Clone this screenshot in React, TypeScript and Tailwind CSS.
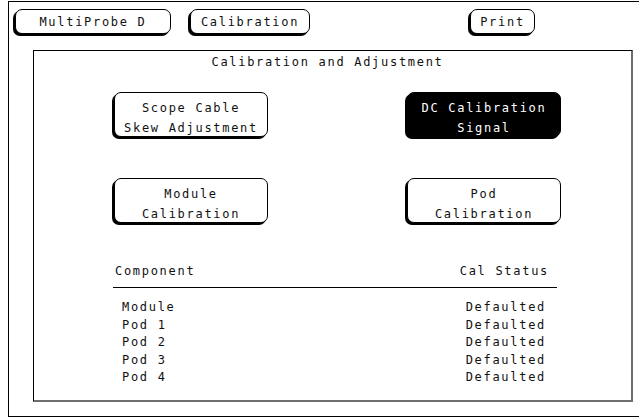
function Btn({
  children,
  dark,
  className,
}: {
  children: React.ReactNode;
  dark?: boolean;
  className?: string;
}) {
  return (
    <div
      className={
        "border border-black rounded-[7px] shadow-[-2px_2px_0_0_#000] text-center " +
        (dark ? "bg-black text-white " : "bg-white text-[#111] ") +
        (className || "")
      }
    >
      {children}
    </div>
  );
}

const rows = ["Module", "Pod 1", "Pod 2", "Pod 3", "Pod 4"];

export default function App() {
  return (
    <div className="w-[639px] h-[419px] bg-white overflow-hidden text-[#111] font-['DejaVu_Sans_Mono',monospace] text-[12px] tracking-[1.7px]">
      <div className="ml-[8px] mt-[1px] w-[660px] h-[416px] border-l border-t border-b border-black">
        {/* top buttons */}
        <div className="flex mt-[7px] ml-[6px] h-[25px]">
          <Btn className="w-[156px] h-[25px] leading-[24px]">MultiProbe D</Btn>
          <Btn className="ml-[19px] w-[120px] h-[25px] leading-[24px]">Calibration</Btn>
          <Btn className="ml-[160px] w-[65px] h-[25px] leading-[24px]">Print</Btn>
        </div>

        {/* panel */}
        <div className="mt-[16px] ml-[24px] w-[600px] h-[352px] border-l border-t border-black border-r-2 border-b-2 border-r-[#6e6e6e] border-b-[#6e6e6e]">
          <div className="mt-[3px] h-[16px] leading-[16px] text-center pr-[10px]">
            Calibration and Adjustment
          </div>

          <div className="flex mt-[22px] ml-[80px]">
            <Btn className="w-[154px] h-[45px] pt-[5px] leading-[20px]">
              Scope Cable<br />Skew Adjustment
            </Btn>
            <Btn dark className="ml-[139px] w-[154px] h-[45px] pt-[5px] leading-[20px]">
              DC Calibration<br />Signal
            </Btn>
          </div>

          <div className="flex mt-[41px] ml-[80px]">
            <Btn className="w-[154px] h-[45px] pt-[5px] leading-[20px]">
              Module<br />Calibration
            </Btn>
            <Btn className="ml-[139px] w-[154px] h-[45px] pt-[5px] leading-[20px]">
              Pod<br />Calibration
            </Btn>
          </div>

          {/* status table */}
          <div className="mt-[40px] ml-[79px] w-[444px]">
            <div className="flex justify-between pl-[2px] pr-[8px] pb-[8px] leading-[16px] border-b border-black">
              <span>Component</span>
              <span>Cal Status</span>
            </div>
            <div className="mt-[11px] pl-[9px] pr-[11px]">
              {rows.map((r) => (
                <div key={r} className="flex justify-between h-[17.5px] leading-[16px]">
                  <span>{r}</span>
                  <span>Defaulted</span>
                </div>
              ))}
            </div>
          </div>
        </div>
      </div>
    </div>
  );
}
